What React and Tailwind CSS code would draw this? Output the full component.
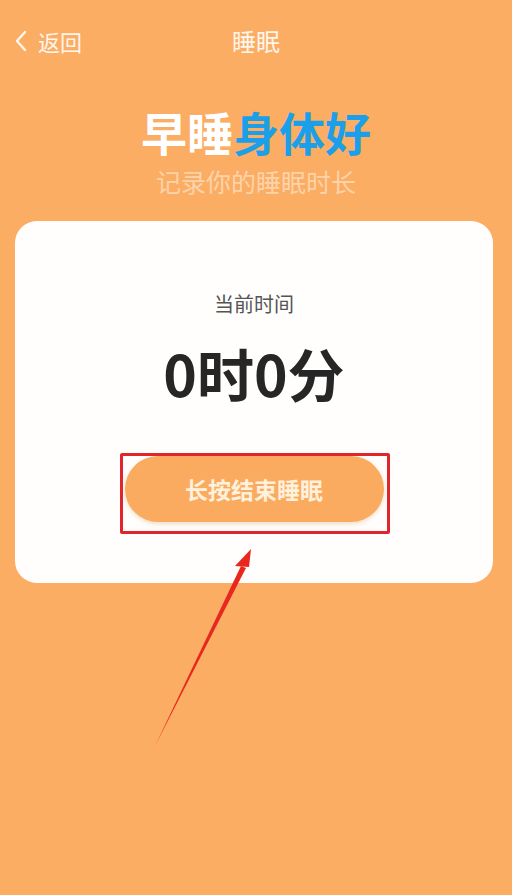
import React from "react";

export default function App() {
  return (
    <div
      className="relative w-full min-h-[895px] bg-[#FBAD64] overflow-hidden"
      style={{ fontFamily: '"Noto Sans CJK SC", "Noto Sans", sans-serif' }}
    >
      {/* Header */}
      <div className="grid grid-cols-[1fr_auto_1fr] items-center h-[82px]">
        <div className="flex items-center pl-[13px] text-[#FFF6EC]">
          <svg width="16" height="24" viewBox="0 0 16 24" fill="none">
            <path d="M12 3 L4 12 L12 21" stroke="#FFF6EC" strokeWidth="2.4" strokeLinecap="round" strokeLinejoin="round" />
          </svg>
          <span className="ml-[9px] text-[22px] leading-[28px]">返回</span>
        </div>
        <div className="text-[24px] leading-[28px] text-[#FFF6EC] px-1">睡眠</div>
        <div />
      </div>

      {/* Hero */}
      <div className="flex flex-col items-center">
        <div className="mt-[21px] text-[46px] leading-[56px] font-bold">
          <span className="text-white">早睡</span>
          <span className="text-[#1A9FE8]">身体好</span>
        </div>
        <div className="mt-[7px] text-[25px] leading-[30px] text-[#FDD3A9]">记录你的睡眠时长</div>
      </div>

      {/* Card */}
      <div className="relative ml-[15px] mr-[19px] mt-[25px] h-[362px] rounded-[22px] bg-[#FFFEFC] flex flex-col items-center">
        <div className="pt-[70px] text-[20px] leading-[26px] text-[#555555]">当前时间</div>
        <div className="mt-[23px] text-[57px] leading-[64px] font-bold text-[#262626]">0时0分</div>
        <button className="mt-[52px] w-[259px] h-[66px] rounded-full bg-[#FBAB60] shadow-[0_2px_4px_rgba(200,120,40,0.25)] text-[23px] font-bold text-[#FFF1DC]">
          长按结束睡眠
        </button>
        {/* Annotation box */}
        <div className="absolute left-[105px] top-[232px] w-[270px] h-[81px] border-[3px] border-[#E0262A] rounded-[2px]" />
      </div>

      {/* Annotation arrow */}
      <svg className="absolute left-0 top-0 pointer-events-none" width="512" height="895" viewBox="0 0 512 895">
        <polygon points="155,746 241,566 246,568" fill="#E8281E" />
        <polygon points="251,549 235,566 249,567" fill="#E8281E" />
      </svg>
    </div>
  );
}
